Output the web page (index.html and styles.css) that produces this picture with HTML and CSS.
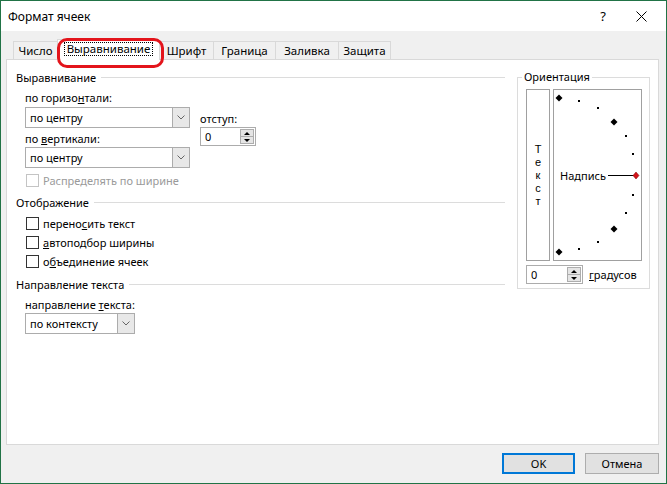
FILE: index.html
```html
<!DOCTYPE html>
<html lang="ru">
<head>
<meta charset="utf-8">
<title>Формат ячеек</title>
<link rel="stylesheet" href="styles.css">
</head>
<body>
<div class="window">
  <div class="titlebar">
    <span class="title">Формат ячеек</span>
    <span class="help">?</span>
    <svg class="close" width="11" height="11" viewBox="0 0 11 11"><path d="M0.5 0.5L10.5 10.5M10.5 0.5L0.5 10.5" stroke="#000" stroke-width="1" fill="none"/></svg>
  </div>
  <div class="body">
    <div class="tabs">
      <div class="tab t1">Число</div>
      <div class="tab t2 active"><span class="focus">Выравнивание</span></div>
      <div class="tab t3">Шрифт</div>
      <div class="tab t4">Граница</div>
      <div class="tab t5">Заливка</div>
      <div class="tab t6 last">Защита</div>
    </div>
    <div class="panel">
      <div class="leftcol">
        <div class="group-head"><span>Выравнивание</span><i class="rule"></i></div>
        <div class="align-row">
          <div class="col-main">
            <div class="lbl"><span>по горизо<u>н</u>тали:</span></div>
            <div class="combo wide m2"><span class="combo-val">по центру</span><span class="combo-btn"><svg width="8" height="5" viewBox="0 0 8 5"><path d="M0.5 0.5L4 4L7.5 0.5" stroke="#666" fill="none"/></svg></span></div>
            <div class="lbl m2"><span>по <u>в</u>ертикали:</span></div>
            <div class="combo wide m1"><span class="combo-val">по центру</span><span class="combo-btn"><svg width="8" height="5" viewBox="0 0 8 5"><path d="M0.5 0.5L4 4L7.5 0.5" stroke="#666" fill="none"/></svg></span></div>
          </div>
          <div class="col-indent">
            <div class="lbl"><span>отступ:</span></div>
            <div class="spin indent-spin"><span class="spin-val">0</span><span class="spin-btns"><span class="sb"><i class="tri-up"></i></span><span class="sb"><i class="tri-dn"></i></span></span></div>
          </div>
        </div>
        <div class="check disabled m4"><span class="box"></span><span>Распределять по ширине</span></div>

        <div class="group-head m6"><span>Отображение</span><i class="rule"></i></div>
        <div class="check m5"><span class="box"></span><span>перено<u>с</u>ить текст</span></div>
        <div class="check m3"><span class="box"></span><span><u>а</u>втоподбор ширины</span></div>
        <div class="check m3"><span class="box"></span><span>о<u>б</u>ъединение ячеек</span></div>

        <div class="group-head m7"><span>Направление текста</span><i class="rule"></i></div>
        <div class="sec">
          <div class="lbl m4"><span>направление <u>т</u>екста:</span></div>
          <div class="combo narrow m1"><span class="combo-val">по контексту</span><span class="combo-btn"><svg width="8" height="5" viewBox="0 0 8 5"><path d="M0.5 0.5L4 4L7.5 0.5" stroke="#666" fill="none"/></svg></span></div>
        </div>
      </div>

      <fieldset class="orient">
        <legend>Ориентация</legend>
        <div class="orient-top">
          <div class="vtext"><span>Т</span><span>е</span><span>к</span><span>с</span><span>т</span></div>
          <div class="dial">
            <svg width="88" height="170" viewBox="0 0 88 170">
              <g fill="#000">
                <polygon points="5,4.5 8.5,8 5,11.5 1.5,8"/>
                <rect x="24" y="10" width="2" height="2"/>
                <rect x="43" y="17" width="2" height="2"/>
                <polygon points="60,28.5 63.5,32 60,35.5 56.5,32"/>
                <rect x="71" y="45" width="2" height="2"/>
                <rect x="78" y="63" width="2" height="2"/>
                <rect x="78" y="104" width="2" height="2"/>
                <rect x="71" y="122" width="2" height="2"/>
                <polygon points="60,135.5 63.5,139 60,142.5 56.5,139"/>
                <rect x="43" y="151" width="2" height="2"/>
                <rect x="24" y="158" width="2" height="2"/>
                <polygon points="5,158.5 8.5,162 5,165.5 1.5,162"/>
              </g>
              <line x1="54" y1="85.5" x2="80" y2="85.5" stroke="#000" stroke-width="1"/>
              <polygon points="82,82 85,85.5 82,89 79,85.5" fill="#d4141a" stroke="#7a0000" stroke-width="0.5"/>
              <text x="6" y="89.5" class="dial-text">Надпись</text>
            </svg>
          </div>
        </div>
        <div class="deg-row">
          <div class="spin deg-spin"><span class="spin-val">0</span><span class="spin-btns"><span class="sb"><i class="tri-up"></i></span><span class="sb"><i class="tri-dn"></i></span></span></div>
          <span><u>г</u>радусов</span>
        </div>
      </fieldset>
    </div>
    <div class="buttons">
      <div class="btn default">OK</div>
      <div class="btn cancel">Отмена</div>
    </div>
  </div>
</div>
</body>
</html>
```
FILE: styles.css
```css
* { box-sizing: border-box; }
html, body { margin: 0; padding: 0; }
body {
  font-family: "Noto Sans", "Liberation Sans", sans-serif;
  font-size: 11px;
  color: #000;
  background: #fff;
}
u { text-decoration: underline; text-underline-offset: 1px; }

.window {
  width: 667px;
  height: 484px;
  border: 1px solid #217346;
  background: #f0f0f0;
  display: flex;
  flex-direction: column;
}

.titlebar {
  height: 30px;
  flex: none;
  background: #fff;
  display: flex;
  align-items: center;
  padding: 0 19px 0 7px;
  font-size: 12px;
}
.title { flex: 1; }
.help { font-size: 13px; margin-right: 30px; }
.close { display: block; }

.body {
  flex: 1;
  display: flex;
  flex-direction: column;
  padding: 8px 7px 0 5px;
}

/* tabs */
.tabs {
  display: flex;
  align-items: flex-end;
  height: 21px;
  padding-left: 7px;
  margin-bottom: -1px;
  position: relative;
  z-index: 1;
}
.tab {
  height: 19px;
  border: 1px solid #d9d9d9;
  border-right: none;
  background: #f0f0f0;
  display: flex;
  align-items: center;
  justify-content: center;
  font-size: 11.5px;
}
.tab.last { border-right: 1px solid #d9d9d9; }
.t1 { width: 44px; }
.t2 { width: 102px; }
.t3 { width: 54px; }
.t4 { width: 62px; }
.t5 { width: 63px; }
.t6 { width: 53px; }
.tab.active {
  height: 21px;
  background: #fff;
  border-bottom-color: #fff;
  position: relative;
  padding-bottom: 2px;
}
.tab.active::after {
  content: "";
  position: absolute;
  left: -1px;
  top: -2px;
  width: 101px;
  height: 24px;
  border: 3px solid #e3141b;
  border-radius: 10px;
}
.focus {
  border: 1px dotted #000;
  height: 14px;
  line-height: 12px;
  padding: 0 2px;
}

/* panel */
.panel {
  height: 386px;
  flex: none;
  background: #fff;
  border: 1px solid #d9d9d9;
  display: flex;
  align-items: flex-start;
  gap: 12px;
  padding: 9px 0 0 9px;
}
.leftcol {
  width: 489px;
  display: flex;
  flex-direction: column;
}

.group-head {
  height: 16px;
  display: flex;
  align-items: center;
}
.rule {
  flex: 1;
  height: 1px;
  background: #dcdcdc;
  margin-left: 5px;
}

.lbl {
  height: 16px;
  display: flex;
  align-items: center;
}

.m1 { margin-top: 1px; }
.m2 { margin-top: 2px; }
.m3 { margin-top: 3px; }
.m4 { margin-top: 4px; }
.m5 { margin-top: 5px; }
.m6 { margin-top: 6px; }
.m7 { margin-top: 7px; }

.align-row {
  display: flex;
  gap: 10px;
  padding-left: 9px;
  margin-top: 4px;
}
.col-main {
  width: 165px;
  display: flex;
  flex-direction: column;
}
.col-indent {
  display: flex;
  flex-direction: column;
  padding-top: 21px;
}
.col-indent .spin { margin-top: 1px; }

.sec { padding-left: 9px; display: flex; flex-direction: column; }

/* combo box */
.combo {
  height: 21px;
  border: 1px solid #acacac;
  background: #fff;
  display: flex;
}
.combo.wide { width: 165px; }
.combo.narrow { width: 110px; }
.combo-val {
  flex: 1;
  padding-left: 4px;
  display: flex;
  align-items: center;
}
.combo-btn {
  width: 17px;
  border-left: 1px solid #acacac;
  background: #e8e8e8;
  display: flex;
  align-items: center;
  justify-content: center;
}
.combo-btn svg { display: block; }

/* spinner */
.spin {
  height: 19px;
  border: 1px solid #acacac;
  background: #fff;
  display: flex;
}
.indent-spin { width: 56px; }
.deg-spin { width: 57px; }
.spin-val {
  flex: 1;
  padding-left: 4px;
  display: flex;
  align-items: center;
}
.spin-btns {
  width: 14px;
  margin: 1px;
  display: flex;
  flex-direction: column;
}
.sb {
  flex: 1;
  border: 1px solid #adadad;
  background: #e5e5e5;
  display: flex;
  align-items: center;
  justify-content: center;
}
.sb + .sb { border-top: none; }
.tri-up {
  width: 0; height: 0;
  border-left: 3px solid transparent;
  border-right: 3px solid transparent;
  border-bottom: 3px solid #000;
}
.tri-dn {
  width: 0; height: 0;
  border-left: 3px solid transparent;
  border-right: 3px solid transparent;
  border-top: 3px solid #000;
}

/* checkboxes */
.check {
  height: 16px;
  display: flex;
  align-items: center;
  padding-left: 10px;
}
.box {
  width: 13px;
  height: 13px;
  border: 1px solid #333;
  background: #fff;
  margin-right: 4px;
}
.check.disabled { color: #9a9a9a; }
.check.disabled .box { border-color: #c4c4c4; }

/* orientation */
.orient {
  width: 133px;
  margin: 0;
  padding: 4px 7px 4px 8px;
  border: 1px solid #dcdcdc;
  min-width: 0;
}
.orient legend {
  padding: 0 2px;
  margin-left: -4px;
  height: 16px;
  line-height: 16px;
}
.orient-top {
  display: flex;
  gap: 3px;
  height: 172px;
}
.vtext {
  width: 24px;
  border: 1px solid #a0a0a0;
  display: flex;
  flex-direction: column;
  align-items: center;
  justify-content: center;
  font-family: "Liberation Sans", "Noto Sans", sans-serif;
  font-size: 11px;
  line-height: 13px;
}
.dial {
  width: 89px;
  border: 1px solid #a0a0a0;
}
.dial svg { display: block; }
.dial-text {
  font-family: "Noto Sans", "Liberation Sans", sans-serif;
  font-size: 11px;
  fill: #000;
}
.deg-row {
  display: flex;
  align-items: center;
  gap: 6px;
  margin-top: 4px;
}

/* buttons */
.buttons {
  display: flex;
  justify-content: flex-end;
  gap: 10px;
  margin-top: 8px;
}
.btn {
  height: 21px;
  border: 1px solid #adadad;
  background: #e1e1e1;
  display: flex;
  align-items: center;
  justify-content: center;
}
.btn.default { width: 73px; border: 2px solid #0078d7; }
.btn.cancel { width: 74px; }
```
